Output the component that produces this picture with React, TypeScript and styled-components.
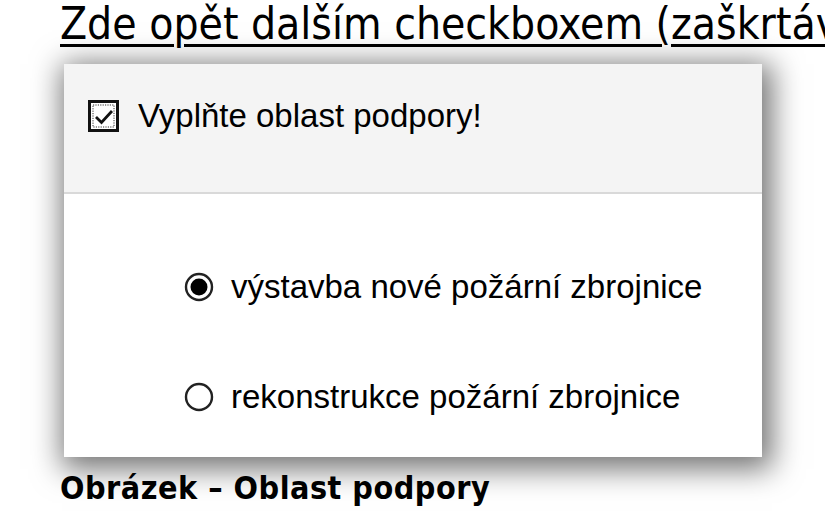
import styled, { createGlobalStyle } from "styled-components";

const GlobalStyle = createGlobalStyle`
  html, body {
    margin: 0;
    padding: 0;
    background: #ffffff;
    overflow: hidden;
  }
`;

function CheckIcon() {
  return (
    <svg width="31" height="32" viewBox="0 0 31 32">
      <rect x="1.5" y="1.5" width="28" height="29" fill="#fff" stroke="#111" strokeWidth="3" />
      <rect x="5" y="5" width="21" height="22" fill="none" stroke="#333" strokeWidth="1" strokeDasharray="1.2 1.2" />
      <path d="M8 17 L13.5 22.5 L24 11" fill="none" stroke="#111" strokeWidth="2.8" />
    </svg>
  );
}

function Radio({ checked }: { checked?: boolean }) {
  return (
    <svg width="30" height="30" viewBox="0 0 30 30">
      <circle cx="15" cy="15" r="13" fill="#fff" stroke="#222" strokeWidth="2.4" />
      {checked && <circle cx="15" cy="15" r="8.5" fill="#000" />}
    </svg>
  );
}

function App() {
  const options = [
    { label: "výstavba nové požární zbrojnice", checked: true },
    { label: "rekonstrukce požární zbrojnice", checked: false },
  ];

  return (
    <Page>
      <GlobalStyle />
      <Title>Zde opět dalším checkboxem (zaškrtávacím políčkem) vyplňte oblast podpory.</Title>
      <Panel>
        <Header>
          <CheckIcon />
          <HeaderText>Vyplňte oblast podpory!</HeaderText>
        </Header>
        <Body>
          {options.map((o) => (
            <Option key={o.label}>
              <Radio checked={o.checked} />
              <OptionText>{o.label}</OptionText>
            </Option>
          ))}
        </Body>
      </Panel>
      <Caption>Obrázek – Oblast podpory</Caption>
    </Page>
  );
}

const Page = styled.div`
  width: 825px;
  height: 522px;
  padding-left: 60px;
  box-sizing: border-box;
  overflow: hidden;
`;

const Title = styled.div`
  font-family: "DejaVu Sans Condensed", "DejaVu Sans", sans-serif;
  font-stretch: condensed;
  font-size: 44px;
  line-height: 44px;
  color: #000;
  white-space: nowrap;
  text-decoration: underline;
  text-decoration-thickness: 3px;
  text-underline-offset: 5px;
  padding-top: 2px;
  height: 62px;
`;

const Panel = styled.div`
  width: 698px;
  margin-left: 4px;
  height: 393px;
  background: #fff;
  box-shadow: 4px 6px 28px 6px rgba(0, 0, 0, 0.55);
`;

const Header = styled.div`
  height: 130px;
  background: #f4f4f4;
  border-bottom: 2px solid #d9d9d9;
  display: flex;
  align-items: center;
  gap: 19px;
  padding-left: 24px;
  padding-bottom: 24px;
  box-sizing: border-box;
`;

const HeaderText = styled.span`
  font-family: "Liberation Sans", Arial, sans-serif;
  font-size: 33px;
  color: #000;
`;

const Body = styled.div`
  display: flex;
  flex-direction: column;
  gap: 72px;
  padding: 74px 0 0 120px;
`;

const Option = styled.div`
  display: flex;
  align-items: center;
  gap: 17px;
`;

const OptionText = styled.span`
  font-family: "Liberation Sans", Arial, sans-serif;
  font-size: 33px;
  color: #000;
`;

const Caption = styled.div`
  font-family: "DejaVu Sans Condensed", "DejaVu Sans", sans-serif;
  font-stretch: condensed;
  font-weight: bold;
  font-size: 32px;
  letter-spacing: 0.5px;
  color: #000;
  margin-top: 12px;
`;

export default App;
